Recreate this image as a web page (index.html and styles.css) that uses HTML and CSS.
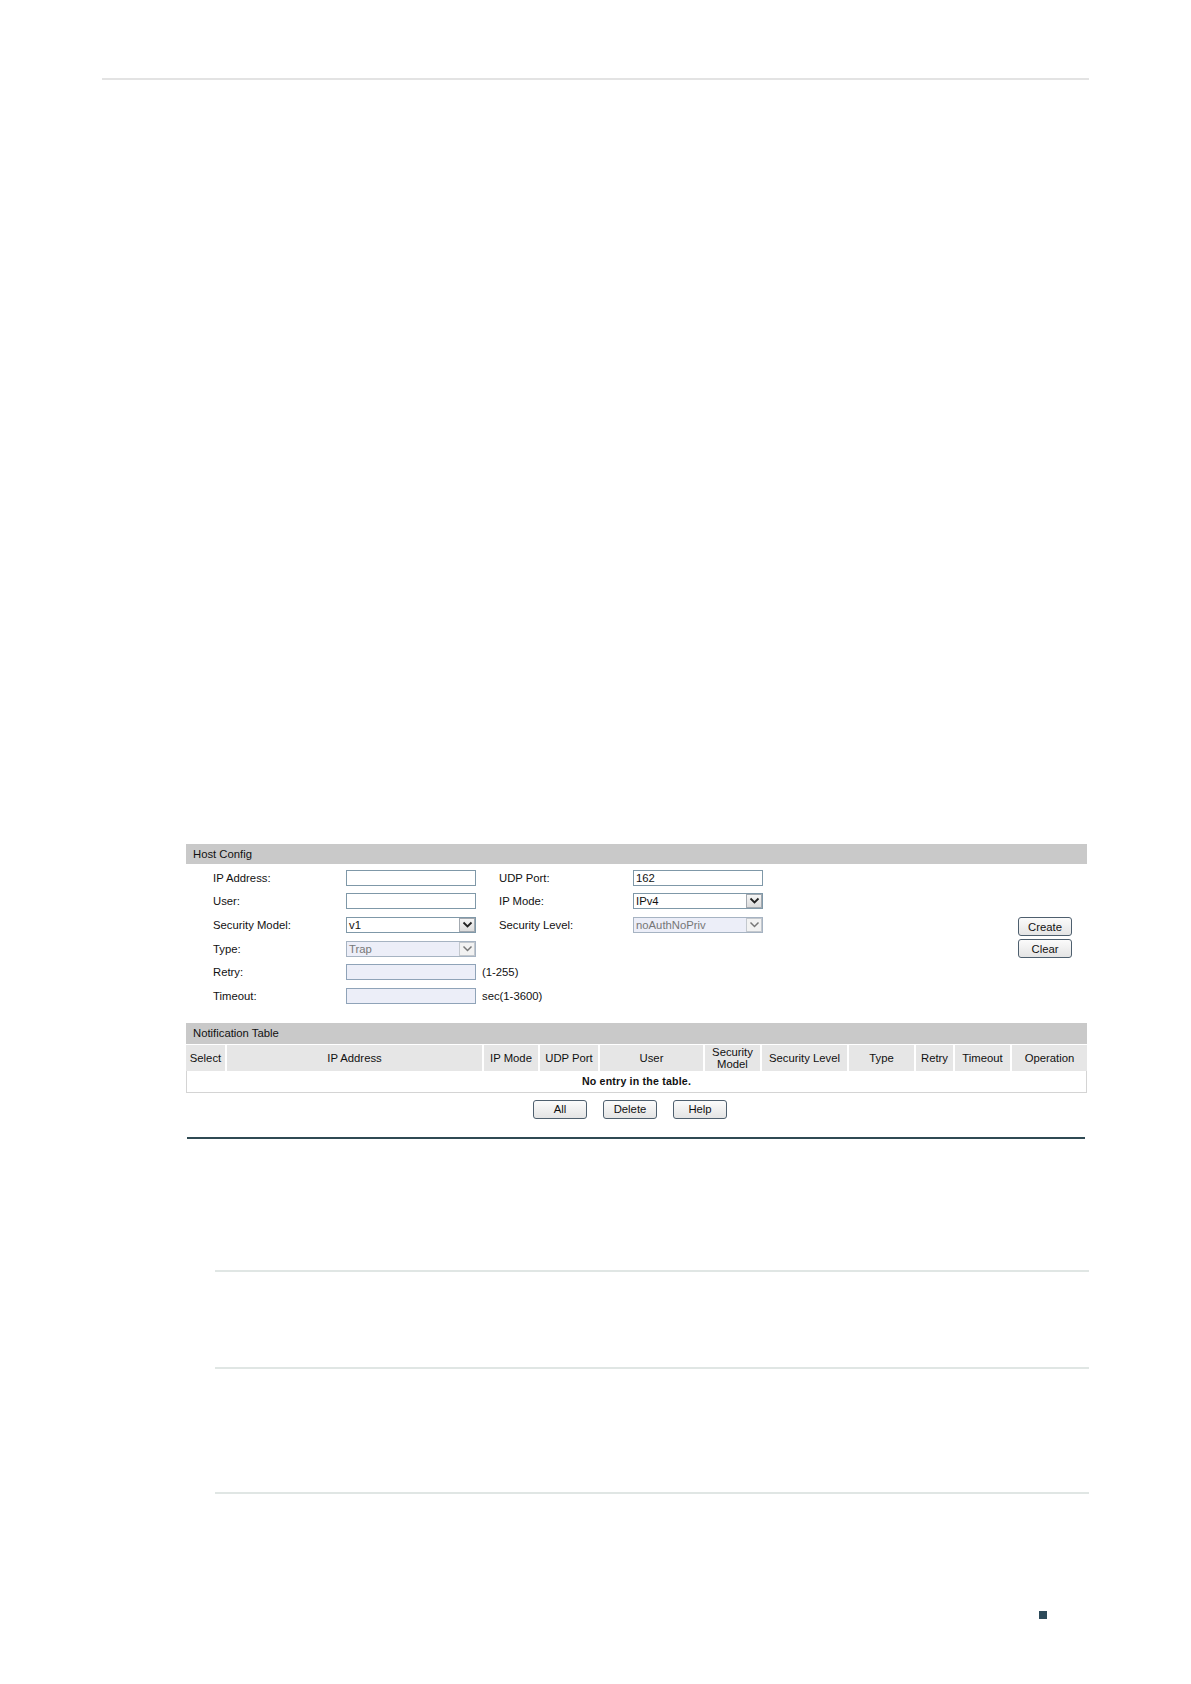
FILE: index.html
```html
<!DOCTYPE html>
<html>
<head>
<meta charset="utf-8">
<link rel="stylesheet" href="styles.css">
</head>
<body>
<div class="page">
  <div class="topline"></div>

  <div class="panel">
    <div class="bar">Host Config</div>
    <div class="hostbody">
      <div class="form">
        <div class="row">
          <span class="lbl">IP Address:</span>
          <span class="inp"></span>
          <span class="lbl col2">UDP Port:</span>
          <span class="inp">162</span>
        </div>
        <div class="row">
          <span class="lbl">User:</span>
          <span class="inp"></span>
          <span class="lbl col2">IP Mode:</span>
          <span class="sel"><span class="seltxt">IPv4</span><span class="arrow"><svg width="11" height="8" viewBox="0 0 11 8"><polyline points="1.5,1.5 5.5,5.5 9.5,1.5" fill="none" stroke="#222" stroke-width="1.8"/></svg></span></span>
        </div>
        <div class="row">
          <span class="lbl">Security Model:</span>
          <span class="sel"><span class="seltxt">v1</span><span class="arrow"><svg width="11" height="8" viewBox="0 0 11 8"><polyline points="1.5,1.5 5.5,5.5 9.5,1.5" fill="none" stroke="#222" stroke-width="1.8"/></svg></span></span>
          <span class="lbl col2">Security Level:</span>
          <span class="sel dis"><span class="seltxt">noAuthNoPriv</span><span class="arrow"><svg width="11" height="8" viewBox="0 0 11 8"><polyline points="1.5,1.5 5.5,5.5 9.5,1.5" fill="none" stroke="#777" stroke-width="1.5"/></svg></span></span>
        </div>
        <div class="row">
          <span class="lbl">Type:</span>
          <span class="sel dis"><span class="seltxt">Trap</span><span class="arrow"><svg width="11" height="8" viewBox="0 0 11 8"><polyline points="1.5,1.5 5.5,5.5 9.5,1.5" fill="none" stroke="#777" stroke-width="1.5"/></svg></span></span>
        </div>
        <div class="row">
          <span class="lbl">Retry:</span>
          <span class="inp dis"></span>
          <span class="suffix">(1-255)</span>
        </div>
        <div class="row">
          <span class="lbl">Timeout:</span>
          <span class="inp dis"></span>
          <span class="suffix">sec(1-3600)</span>
        </div>
      </div>
      <div class="sidebtns">
        <button class="btn">Create</button>
        <button class="btn">Clear</button>
      </div>
    </div>

    <div class="bar notif">Notification Table</div>
    <div class="thead">
      <div class="th">Select</div>
      <div class="th">IP Address</div>
      <div class="th">IP Mode</div>
      <div class="th">UDP Port</div>
      <div class="th">User</div>
      <div class="th two">Security<br>Model</div>
      <div class="th">Security Level</div>
      <div class="th">Type</div>
      <div class="th">Retry</div>
      <div class="th">Timeout</div>
      <div class="th">Operation</div>
    </div>
    <div class="empty">No entry in the table.</div>
    <div class="btnrow">
      <button class="btn">All</button>
      <button class="btn">Delete</button>
      <button class="btn">Help</button>
    </div>
    <div class="darkline"></div>
  </div>

  <div class="lines">
    <div class="lline l1"></div>
    <div class="lline l2"></div>
    <div class="lline l3"></div>
  </div>

  <div class="footer"><span class="sq"></span></div>
</div>
</body>
</html>
```

FILE: styles.css
```css
html, body {
  margin: 0;
  padding: 0;
  background: #ffffff;
}
body {
  font-family: "Liberation Sans", Arial, sans-serif;
  font-size: 11.3px;
  color: #111;
}
.page {
  width: 1191px;
  height: 1684px;
  padding-top: 78px;
  box-sizing: border-box;
}
.topline {
  margin-left: 102px;
  width: 987px;
  height: 2px;
  background: #e3e3e3;
}
.panel {
  margin: 764px 0 0 186px;
  width: 901px;
}
.bar {
  height: 20px;
  line-height: 21px;
  background: #c9c9c9;
  padding-left: 7px;
  color: #111;
}
.hostbody {
  display: flex;
  padding-top: 2px;
}
.form {
  padding-left: 27px;
  display: flex;
  flex-direction: column;
}
.row {
  height: 23.65px;
  display: flex;
  align-items: center;
}
.lbl {
  width: 133px;
  flex: none;
}
.lbl.col2 {
  width: 134px;
  margin-left: 23px;
}
.inp {
  width: 130px;
  height: 16px;
  box-sizing: border-box;
  border: 1px solid #7f98a8;
  background: #fff;
  padding-left: 2px;
  line-height: 14px;
  flex: none;
}
.inp.dis {
  background: #eceef8;
  border-color: #8fa3b8;
}
.suffix {
  margin-left: 6px;
}
.sel {
  width: 130px;
  height: 16px;
  box-sizing: border-box;
  border: 1px solid #7f98a8;
  background: #fff;
  display: flex;
  align-items: stretch;
  flex: none;
}
.sel.dis {
  background: #eceef8;
  border-color: #a6b3c2;
  color: #777;
}
.seltxt {
  flex: 1;
  padding-left: 2px;
  line-height: 14px;
}
.arrow {
  width: 16px;
  box-sizing: border-box;
  border: 1px solid #a3a9b0;
  background: linear-gradient(#f6f6f6, #dcdcdc);
  display: flex;
  align-items: center;
  justify-content: center;
  margin: 0;
}
.sel.dis .arrow {
  border-color: #c3c8ce;
  background: #f2f2f2;
}
.sidebtns {
  margin-left: auto;
  margin-right: 15px;
  padding-top: 51px;
  display: flex;
  flex-direction: column;
  gap: 3px;
}
.btn {
  width: 54px;
  height: 19px;
  box-sizing: border-box;
  border: 1px solid #4e5f6e;
  border-radius: 3px;
  background: linear-gradient(#fbfbfb, #e4e4e4);
  font-family: "Liberation Sans", Arial, sans-serif;
  font-size: 11.3px;
  color: #111;
  padding: 0;
  line-height: 16px;
}
.notif {
  margin-top: 15px;
  height: 21px;
}
.thead {
  display: grid;
  grid-template-columns: 39px 255px 54px 58px 103px 55px 85px 65px 37px 55px 75px;
  column-gap: 2px;
  background: #fff;
  padding-top: 1px;
}
.th {
  height: 26px;
  background: #e6e6e6;
  display: flex;
  align-items: center;
  justify-content: center;
  text-align: center;
  white-space: nowrap;
}
.th.two {
  line-height: 12px;
  padding-top: 1px;
  box-sizing: border-box;
}
.empty {
  height: 22px;
  box-sizing: border-box;
  border: 1px solid #d4d4d4;
  border-top: none;
  text-align: center;
  font-weight: bold;
  font-size: 10.6px;
  line-height: 20px;
  letter-spacing: 0.2px;
}
.btnrow {
  display: flex;
  justify-content: center;
  gap: 16px;
  padding-right: 13px;
  margin-top: 7px;
}
.darkline {
  margin-top: 18px;
  margin-left: 1px;
  width: 898px;
  height: 2px;
  background: #2f4a53;
}
.lines {
  margin-left: 215px;
  width: 874px;
}
.lline {
  height: 2px;
  background: #e0e6e4;
}
.l1 { margin-top: 131px; }
.l2 { margin-top: 95px; }
.l3 { margin-top: 123px; }
.footer {
  margin-top: 117px;
  padding-left: 1039px;
  height: 8px;
}
.sq {
  display: block;
  width: 8px;
  height: 8px;
  background: #2d4a5a;
}
```
